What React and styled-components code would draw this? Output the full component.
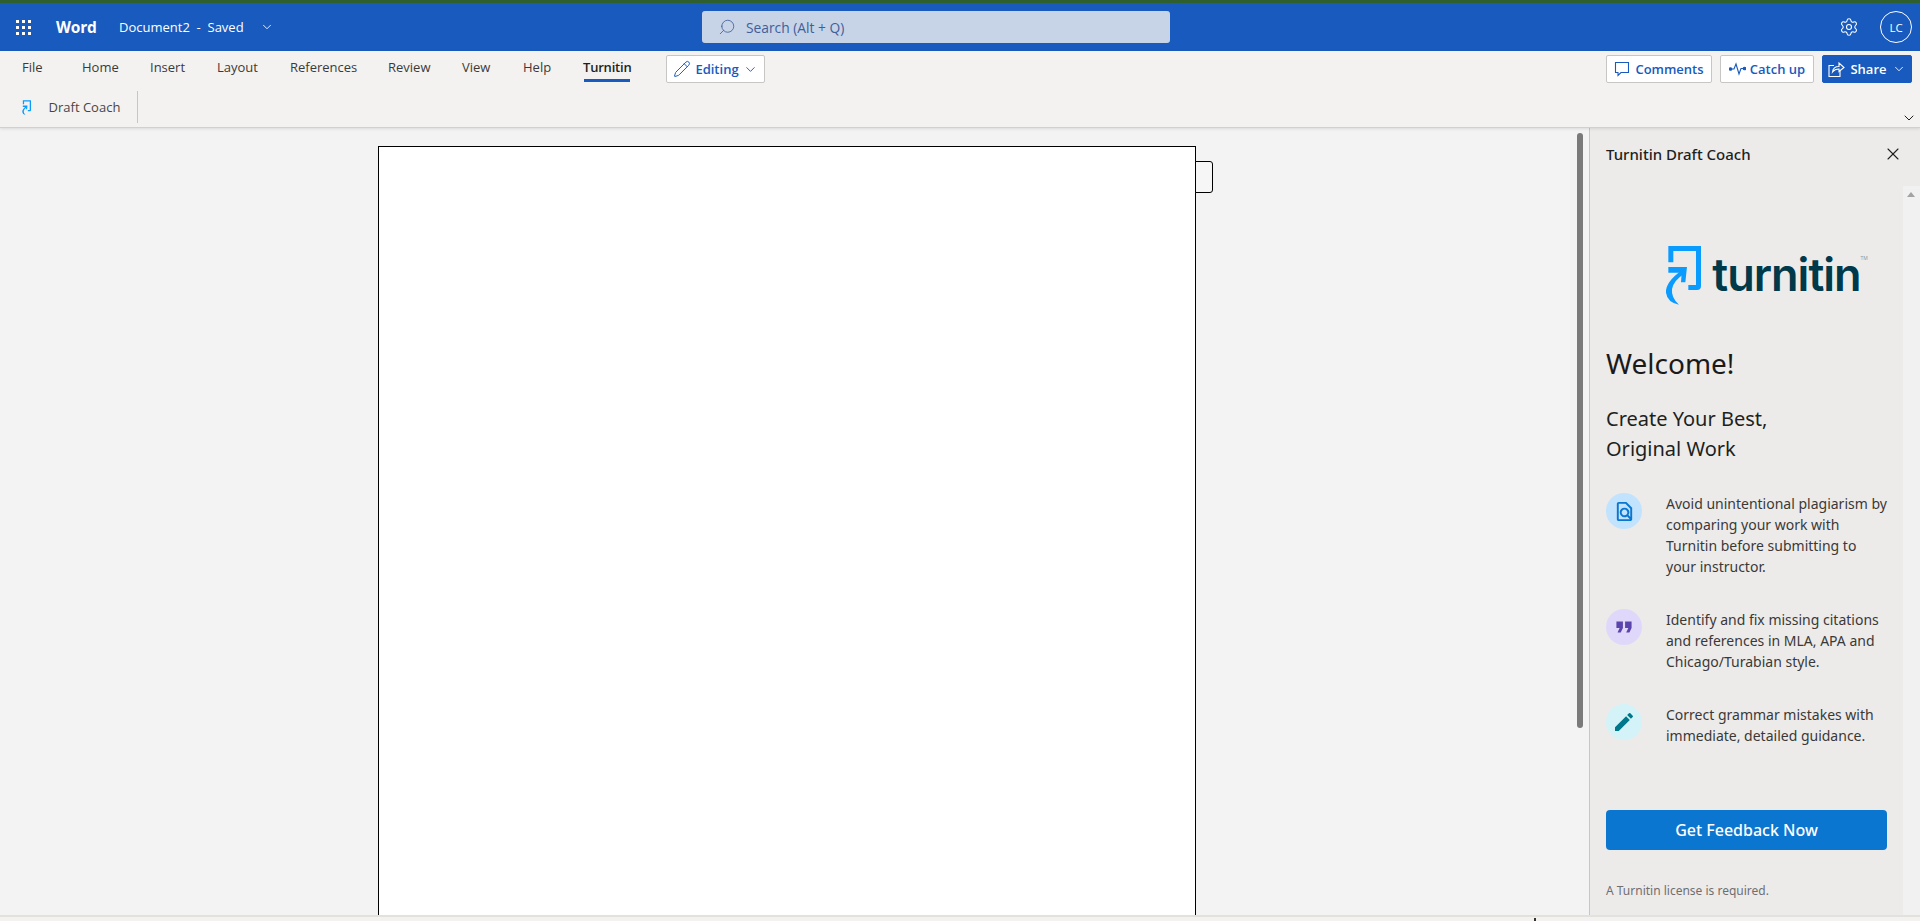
import React from "react";
import styled, { createGlobalStyle } from "styled-components";
import { Search, Pencil, Settings, X, ChevronDown } from "lucide-react";
import { MdEdit, MdFormatQuote, MdOutlineFindInPage } from "react-icons/md";

const Global = createGlobalStyle`
  html, body { margin: 0; padding: 0; height: 100%; overflow: hidden; background: #f3f3f3; }
  #root { height: 921px; }
  * { box-sizing: border-box; }
`;

const Page = styled.div`
  display: flex; flex-direction: column; width: 1920px; height: 921px;
  font-family: "Open Sans", "Noto Sans", sans-serif; background: #f3f3f3;
  border-top: 3px solid #2f5f2f;
`;

/* Title bar */
const TitleBar = styled.header`
  display: flex; align-items: center; height: 48px; flex: none; background: #185abd; color: #fff;
  padding-left: 16px; padding-right: 8px;
`;
const Waffle = styled.div`
  display: grid; grid-template-columns: repeat(3, 3px); grid-auto-rows: 3px; gap: 3px; width: 15px; margin-right: 25px;
  i { background: #fff; display: block; }
`;
const AppName = styled.span`
  font-size: 15.5px; font-weight: 700; width: 63px; letter-spacing: -0.2px;
`;
const DocName = styled.span`
  font-size: 13px; width: 141px; white-space: pre;
`;
const SearchBox = styled.div`
  display: flex; align-items: center; gap: 10px; width: 468px; height: 32px; margin-left: 428px;
  background: #c7d3e6; border-radius: 3px; padding-left: 16px; color: #3f5f9b; font-size: 13.8px;
`;
const Spacer = styled.div`flex: 1;`;
const GearWrap = styled.div`display: flex; margin-right: 21px;`;
const Avatar = styled.div`
  width: 32px; height: 32px; border: 1px solid #fff; border-radius: 50%;
  display: flex; align-items: center; justify-content: center; font-size: 11.5px;
`;

/* Ribbon */
const Ribbon = styled.section`
  flex: none; height: 77px; background: #f3f2f1; border-bottom: 1px solid #d2d0ce;
  box-shadow: 0 1px 3px rgba(0,0,0,.10); position: relative; z-index: 2;
  display: flex; flex-direction: column;
`;
const TabRow = styled.div`
  display: flex; align-items: flex-start; height: 40px; padding-left: 22px; padding-right: 8px; padding-top: 4px;
`;
const Tab = styled.div`
  width: ${p => p.$w}px; flex: none; height: 28px; font-size: 13px; line-height: 24px; color: #3b3a39;
  white-space: nowrap; position: relative; font-weight: ${p => p.$active ? 600 : 400};
  ${p => p.$active && `
    color: #201f1e; letter-spacing: -0.2px;
    &::after { content: ""; position: absolute; left: 1px; right: 1px; top: 24px; height: 3px; background: #185abd; }
  `}
`;
const OutlineButton = styled.button`
  display: flex; align-items: center; justify-content: center; gap: ${p => p.$gap ?? 5}px; height: 28px; width: ${p => p.$w}px;
  background: #fff; border: 1px solid #c8c6c4; border-radius: 2px; color: #185abd;
  font: 600 13px "Open Sans", sans-serif; padding: 0; flex: none; margin-left: ${p => p.$ml ?? 0}px;
`;
const ShareButton = styled(OutlineButton)`
  background: #185abd; border-color: #185abd; color: #fff;
`;
const CommandRow = styled.div`
  display: flex; align-items: center; height: 36px; padding-left: 22px; padding-bottom: 4px; position: relative;
`;
const CoachLabel = styled.span`
  font-size: 13px; color: #484644; margin-left: 17px;
`;
const RibbonDivider = styled.div`
  width: 1px; height: 32px; background: #c8c6c4; margin-left: 17px;
`;
const Collapse = styled.div`
  position: absolute; right: 3px; bottom: 1px; display: flex; color: #201f1e;
`;

/* Main */
const Main = styled.main`
  flex: 1; display: flex; min-height: 0; position: relative;
`;
const DocArea = styled.div`
  flex: 1; display: flex; padding-left: 378px; padding-top: 18px; position: relative; background: #f3f3f3; overflow: hidden;
`;
const Sheet = styled.div`
  width: 818px; height: 900px; background: #fff; border: 1px solid #000; flex: none;
`;
const SheetTab = styled.div`
  width: 18px; height: 32px; margin-top: 15px; margin-left: -1px; border: 1px solid #000;
  border-radius: 0 3px 3px 0; background: #f6f6f6; flex: none;
`;
const ScrollThumb = styled.div`
  position: absolute; right: 6px; top: 5px; width: 6px; height: 595px; background: #7a7a7a; border-radius: 3px;
`;

/* Side panel */
const Panel = styled.aside`
  width: 331px; flex: none; background: #edebe9; border-left: 1px solid #c8c6c4; display: flex; flex-direction: column;
  font-family: "Noto Sans", sans-serif; position: relative;
`;
const PanelHeader = styled.div`
  display: flex; align-items: center; justify-content: space-between; flex: none; height: 51px; padding: 0 17px 0 16px;
  font-size: 15px; font-weight: 500; color: #201f1e;
`;
const PanelTrack = styled.div`
  position: absolute; right: 0; top: 58px; bottom: 0; width: 17px; background: #f1f1f1;
  &::before { content: ""; position: absolute; left: 4px; top: 6px; border-left: 4px solid transparent; border-right: 4px solid transparent; border-bottom: 5px solid #a3a3a3; }
`;
const PanelBody = styled.div`
  flex: 1; padding-left: 16px; width: 298px; display: flex; flex-direction: column;
`;
const Logo = styled.div`
  display: flex; align-items: flex-start; margin-left: 59px; margin-top: 66px; height: 60px; color: #00394a;
`;
const LogoWord = styled.span`
  font: 600 45px/50px "Inter", sans-serif; letter-spacing: -1px; margin-left: 9px; margin-top: 5px;
`;
const LogoMarkTm = styled.span`
  font-size: 5px; line-height: 6px; margin-top: 10px; color: #8a9aa0;
`;
const Welcome = styled.h1`
  margin: 38px 0 0; font-size: 28px; line-height: 40px; font-weight: 400; color: #1b1a19;
`;
const Sub = styled.h2`
  margin: 21px 0 0; font-size: 20px; line-height: 30px; font-weight: 400; color: #201f1e;
`;
const Features = styled.ul`
  list-style: none; margin: 0; padding: 0; display: flex; flex-direction: column;
`;
const Feature = styled.li`
  display: flex; margin-top: ${p => p.$mt}px;
`;
const Badge = styled.div`
  width: 36px; height: 36px; border-radius: 50%; background: ${p => p.$bg}; color: ${p => p.$fg};
  display: flex; align-items: center; justify-content: center; flex: none; margin-right: 24px;
`;
const FeatureText = styled.p`
  margin: 0; font-size: 14px; line-height: 21px; color: #3a3938; white-space: pre-line;
`;
const Cta = styled.button`
  width: 281px; height: 40px; margin-top: 64px; background: #0b76d0; color: #fff; border: 0; border-radius: 4px;
  font: 500 16px "Noto Sans", sans-serif; flex: none;
`;
const License = styled.div`
  margin-top: 33px; font-size: 12px; line-height: 16px; color: #6e6f73;
`;

/* Bottom */
const BottomBar = styled.footer`
  flex: none; height: 6px; border-top: 2px solid #e3e1de; background: #f3f2f1; position: relative; z-index: 3;
`;
const BottomTick = styled.div`
  position: absolute; left: 1534px; top: 1px; width: 2px; height: 3px; background: #323130;
`;

const LogoMark = ({ size = 60 }) => (
  <svg width={size * 115 / 180} height={size} viewBox="70 60 115 180" fill="#0a9bff" style={{ flex: "none" }}>
    <path d="M80 63H178V183Q178 195 166 195H140V180H163V78H95V112H80Z" />
    <path d="M80 126H136L131 172H118L120 143H80Z" />
    <path d="M124 133Q70 172 73 203Q77 232 112 239Q88 218 91 192Q96 166 128 146Z" />
  </svg>
);
const CommentIcon = () => (
  <svg width="16" height="16" viewBox="0 0 16 16" fill="none" stroke="currentColor" strokeWidth="1.1"><path d="M1.5 1.5H14.5V11.5H7L4 14.5V11.5H1.5Z" /></svg>
);
const CatchUpIcon = () => (
  <svg width="17" height="14" viewBox="0 0 17 14" fill="none" stroke="currentColor" strokeWidth="1.1"><path d="M2 7H5L7 2L10 12L12 6.5H15" /><circle cx="1.5" cy="7" r="1.3" fill="currentColor" /><circle cx="15.5" cy="6.5" r="1.3" fill="currentColor" /></svg>
);
const ShareIcon = () => (
  <svg width="17" height="16" viewBox="0 0 17 16" fill="none" stroke="#fff" strokeWidth="1.1"><path d="M6 4.5H1V15.5H12V10" /><path d="M4.5 11C5 7 8 5.5 11 5.5V2L16 6.5L11 10.5V8C8 8 6 9 4.5 11Z" /></svg>
);

const tabs = [["File", 60], ["Home", 68], ["Insert", 67], ["Layout", 73], ["References", 98], ["Review", 74], ["View", 61], ["Help", 60]];

export default function App() {
  return (
    <Page>
      <Global />
      <TitleBar>
        <Waffle>{Array.from({ length: 9 }, (_, i) => <i key={i} />)}</Waffle>
        <AppName>Word</AppName>
        <DocName>{"Document2  -  Saved"}</DocName>
        <ChevronDown size={14} strokeWidth={1.5} />
        <SearchBox><Search size={18} strokeWidth={1.1} style={{ transform: "scaleX(-1)" }} />Search (Alt + Q)</SearchBox>
        <Spacer />
        <GearWrap><Settings size={20} strokeWidth={1.3} /></GearWrap>
        <Avatar>LC</Avatar>
      </TitleBar>
      <Ribbon>
        <TabRow>
          {tabs.map(([t, w]) => <Tab key={t} $w={w}>{t}</Tab>)}
          <Tab $w={48} $active>Turnitin</Tab>
          <OutlineButton $w={99} $ml={35} $gap={4}><Pencil size={18} strokeWidth={1.3} />Editing<ChevronDown size={15} strokeWidth={1.5} /></OutlineButton>
          <Spacer />
          <OutlineButton $w={106} $gap={5}><CommentIcon />Comments</OutlineButton>
          <OutlineButton $w={94} $ml={8} $gap={4}><CatchUpIcon />Catch up</OutlineButton>
          <ShareButton $w={90} $ml={8} $gap={5}><ShareIcon />Share<ChevronDown size={14} strokeWidth={1.5} /></ShareButton>
        </TabRow>
        <CommandRow>
          <LogoMark size={15} />
          <CoachLabel>Draft Coach</CoachLabel>
          <RibbonDivider />
          <Collapse><ChevronDown size={16} strokeWidth={1.5} /></Collapse>
        </CommandRow>
      </Ribbon>
      <Main>
        <DocArea>
          <Sheet />
          <SheetTab />
          <ScrollThumb />
        </DocArea>
        <Panel>
          <PanelHeader>Turnitin Draft Coach<X size={20} strokeWidth={1.3} /></PanelHeader>
          <PanelTrack />
          <PanelBody>
            <Logo><LogoMark /><LogoWord>turnitin</LogoWord><LogoMarkTm>TM</LogoMarkTm></Logo>
            <Welcome>Welcome!</Welcome>
            <Sub>Create Your Best,<br />Original Work</Sub>
            <Features>
              <Feature $mt={29}>
                <Badge $bg="#c2e3fd" $fg="#0b76d0"><MdOutlineFindInPage size={23} /></Badge>
                <FeatureText>{"Avoid unintentional plagiarism by\ncomparing your work with\nTurnitin before submitting to\nyour instructor."}</FeatureText>
              </Feature>
              <Feature $mt={32}>
                <Badge $bg="#e0d8fa" $fg="#5b45ad"><MdFormatQuote size={26} /></Badge>
                <FeatureText>{"Identify and fix missing citations\nand references in MLA, APA and\nChicago/Turabian style."}</FeatureText>
              </Feature>
              <Feature $mt={32}>
                <Badge $bg="#d3f3f8" $fg="#00788c"><MdEdit size={24} /></Badge>
                <FeatureText>{"Correct grammar mistakes with\nimmediate, detailed guidance."}</FeatureText>
              </Feature>
            </Features>
            <Cta>Get Feedback Now</Cta>
            <License>A Turnitin license is required.</License>
          </PanelBody>
        </Panel>
      </Main>
      <BottomBar><BottomTick /></BottomBar>
    </Page>
  );
}
